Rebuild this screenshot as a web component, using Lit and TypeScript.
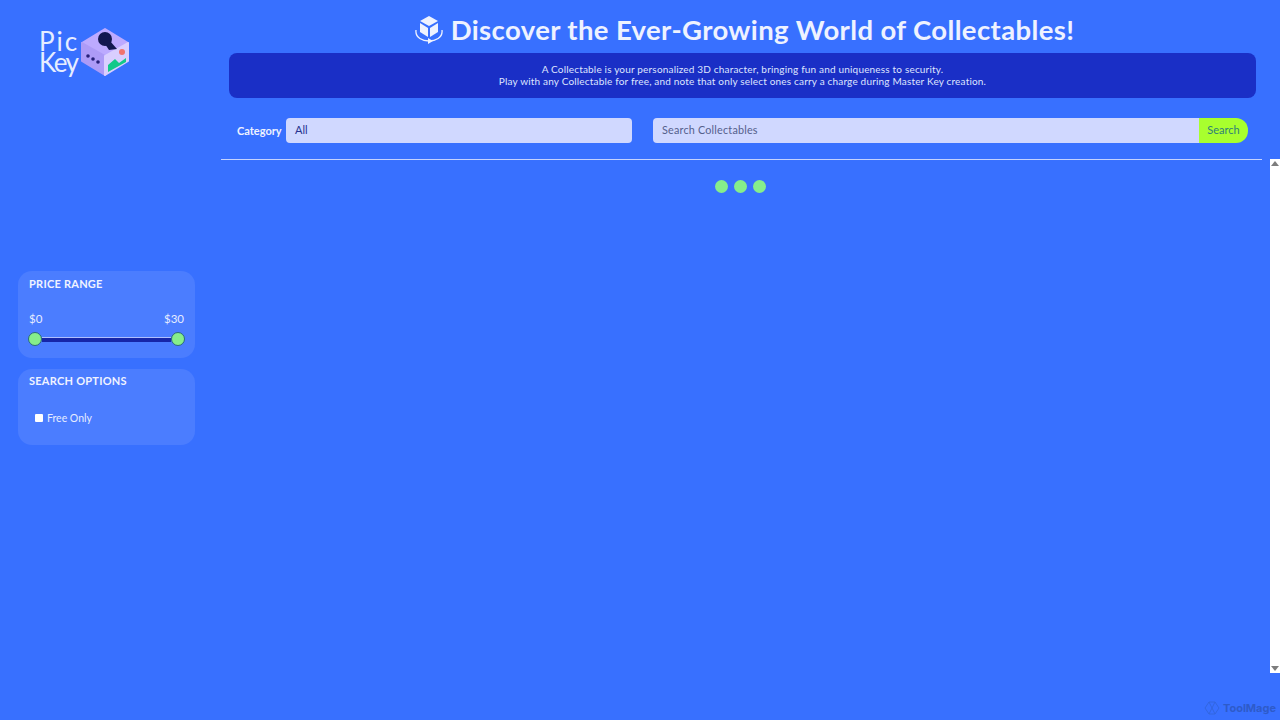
import { LitElement, html, css } from "lit";
import { customElement } from "lit/decorators.js";

@customElement("app-root")
export class AppRoot extends LitElement {
  static styles = css`
    :host { display: block; width: 1280px; height: 720px; overflow: hidden; position: relative; background: #3870ff; color: #eef2ff; font-family: "Lato", "Liberation Sans", sans-serif; }
    * { box-sizing: border-box; }
    .page { display: flex; height: 720px; }
    .side { width: 221px; flex: none; padding: 18px 26px 0 18px; display: flex; flex-direction: column; }
    .logo { display: flex; align-items: flex-start; padding-left: 21px; height: 70px; }
    .logoText { font-size: 26px; line-height: 21px; font-weight: 400; color: #e6edff; width: 43px; padding-top: 13px; }
    .pic { letter-spacing: 2px; }
    .key { letter-spacing: -1.6px; }
    .cube { margin: 10px 0 0 -1px; }
    .card { background: #4b7dff; border-radius: 14px; padding: 5px 11px; width: 177px; }
    .price { margin-top: 183px; height: 87px; }
    .options { margin-top: 11px; height: 76px; padding-top: 4px; }
    .cardTitle { font-size: 11px; font-weight: 700; line-height: 15px; letter-spacing: 0.25px; color: #f0f3ff; }
    .labels { display: flex; justify-content: space-between; font-size: 11.5px; line-height: 14px; margin-top: 21px; color: #e6ecff; }
    .slider { display: flex; align-items: center; margin: 6px -1px 0 -1px; }
    .thumb { width: 14px; height: 14px; flex: none; border-radius: 50%; background: #86ee8b; border: 1px solid #2b6a78; }
    .track { flex: 1; height: 5px; background: #1626a8; border-top: 1px solid #aebfff; }
    .check { display: flex; align-items: center; gap: 4px; margin: 23px 0 0 6px; font-size: 10.5px; line-height: 14px; color: #e6ecff; }
    .box { width: 8px; height: 8px; background: #fff; border-radius: 1px; }
    .main { width: 1041px; flex: none; display: flex; flex-direction: column; }
    .title { margin: 0; display: flex; justify-content: center; align-items: center; gap: 8px; height: 53px; padding-top: 6px; padding-left: 6px; font-size: 27.5px; font-weight: 700; letter-spacing: 0.37px; color: #eef2ff; white-space: nowrap; }
    .banner { margin: 0 6px 0 8px; height: 45px; border-radius: 8px; background: #1a2fc6; display: flex; flex-direction: column; align-items: center; justify-content: center; font-size: 10px; line-height: 12px; letter-spacing: 0.18px; color: #dfe5ff; padding-bottom: 2px; }
    .filters { display: flex; align-items: center; height: 25px; margin-top: 20px; padding: 0 14px 0 16px; }
    .catLabel { font-size: 11px; font-weight: 700; width: 49px; flex: none; white-space: nowrap; }
    .select { width: 346px; height: 25px; border-radius: 4px; background: #d0d8ff; color: #27338f; font-size: 11px; line-height: 23px; padding: 0 0 2px 9px; }
    .search { flex: 1; margin-left: 21px; height: 25px; display: flex; }
    .input { flex: 1; background: #d0d8ff; border-radius: 4px 0 0 4px; color: #555f8c; font-size: 10.8px; line-height: 23px; padding: 0 0 2px 9px; letter-spacing: 0.2px; }
    .btn { width: 49px; background: #a8ff2e; border-radius: 0 12px 12px 0; color: #2f7f78; font-size: 11px; line-height: 23px; text-align: center; }
    .rule { height: 1px; background: #c5d3ff; margin-top: 16px; }
    .dots { display: flex; justify-content: center; gap: 6px; margin-top: 20px; padding-right: 2px; }
    .dot { width: 13px; height: 13px; border-radius: 50%; background: #86ee8b; }
    .scroll { width: 10px; margin: 159px 0 47px 8px; flex: none; background: #fff; display: flex; flex-direction: column; justify-content: space-between; align-items: center; padding: 2px 0; }
    .tri { width: 0; height: 0; border-left: 4px solid transparent; border-right: 4px solid transparent; }
    .up { border-bottom: 5px solid #7d7d7d; }
    .down { border-top: 5px solid #7d7d7d; }
    .mark { position: absolute; right: 4px; bottom: 5px; display: flex; align-items: center; gap: 3px; font-family: "Inter", sans-serif; font-size: 11px; font-weight: 700; color: #2e5bc9; }
  `;

  render() {
    return html`
      <div class="page">
        <aside class="side">
          <div class="logo">
            <div class="logoText"><div class="pic">Pic</div><div class="key">Key</div></div>
            <svg class="cube" width="48" height="48" viewBox="0 0 48 48">
              <polygon points="24,1 47,15 24,28 1,15" fill="#bcaaff" stroke="#bcaaff" stroke-width="2" stroke-linejoin="round"/>
              <polygon points="1,15 24,28 24,47 1,33" fill="#ad9bf7" stroke="#ad9bf7" stroke-width="2" stroke-linejoin="round"/>
              <polygon points="47,15 24,28 24,47 47,33" fill="#d9ceff" stroke="#d9ceff" stroke-width="2" stroke-linejoin="round"/>
              <circle cx="24" cy="11" r="7" fill="#12184f"/>
              <polygon points="22,13 29,13 36,21 28,22" fill="#12184f"/>
              <circle cx="7" cy="28" r="1.8" fill="#27207a"/><circle cx="12" cy="31" r="1.8" fill="#27207a"/><circle cx="17" cy="34" r="1.8" fill="#27207a"/>
              <polygon points="27,44 27,37 34,31 38,35 45,30 45,34" fill="#12c98a"/>
              <circle cx="41" cy="24" r="3" fill="#f0736f"/>
            </svg>
          </div>
          <section class="card price">
            <div class="cardTitle">PRICE RANGE</div>
            <div class="labels"><span>$0</span><span>$30</span></div>
            <div class="slider"><div class="thumb"></div><div class="track"></div><div class="thumb"></div></div>
          </section>
          <section class="card options">
            <div class="cardTitle">SEARCH OPTIONS</div>
            <div class="check"><span class="box"></span><span>Free Only</span></div>
          </section>
        </aside>
        <main class="main">
          <h1 class="title">
            <svg width="28" height="30" viewBox="0 0 28 30" fill="none">
              <polygon points="14,1 23,6 14,11 5,6" fill="#eef2ff"/>
              <polygon points="5,8 13,13 13,22 5,17" fill="#eef2ff"/>
              <polygon points="23,8 15,13 15,22 23,17" fill="#eef2ff"/>
              <path d="M1 15 C0 23 8 26 14 26 C20 26 28 23 27 15" stroke="#eef2ff" stroke-width="1.3"/>
              <polygon points="13,23 18,26 13,29" fill="#eef2ff"/>
            </svg>
            <span>Discover the Ever-Growing World of Collectables!</span>
          </h1>
          <div class="banner">
            <div>A Collectable is your personalized 3D character, bringing fun and uniqueness to security.</div>
            <div>Play with any Collectable for free, and note that only select ones carry a charge during Master Key creation.</div>
          </div>
          <div class="filters">
            <span class="catLabel">Category</span>
            <div class="select">All</div>
            <div class="search"><div class="input">Search Collectables</div><div class="btn">Search</div></div>
          </div>
          <div class="rule"></div>
          <div class="dots"><span class="dot"></span><span class="dot"></span><span class="dot"></span></div>
        </main>
        <div class="scroll"><span class="tri up"></span><span class="tri down"></span></div>
      </div>
      <div class="mark">
        <svg width="16" height="14" viewBox="0 0 16 14" fill="none" stroke="#3266e0" stroke-width="1"><polygon points="5,1 11,1 15,7 11,13 5,13 1,7"/><path d="M5 1 L11 13 M11 1 L5 13"/></svg>
        <span>ToolMage</span>
      </div>
    `;
  }
}
